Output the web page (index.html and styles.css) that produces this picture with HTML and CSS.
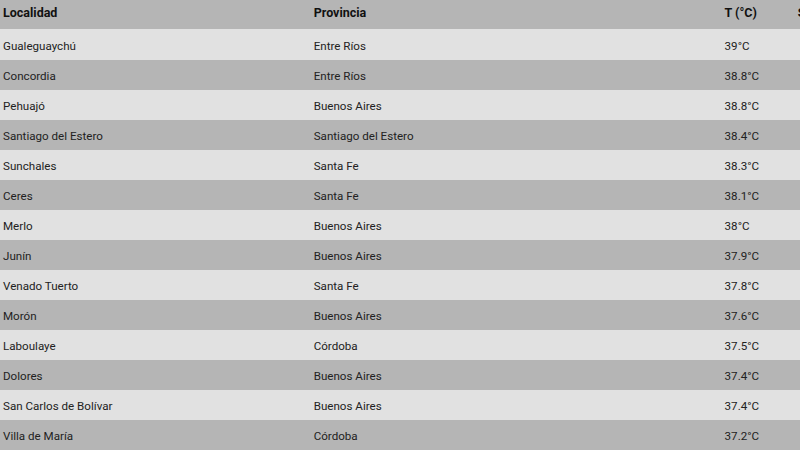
FILE: index.html
```html
<!DOCTYPE html>
<html lang="es">
<head>
<meta charset="utf-8">
<title>Temperaturas</title>
<link rel="stylesheet" href="styles.css">
</head>
<body>
<table class="temps">
  <thead>
    <tr><th class="c1">Localidad</th><th class="c2">Provincia</th><th class="c3">T (°C)</th><th class="c4">ST (°C)</th></tr>
  </thead>
  <tbody>
    <tr><td>Gualeguaychú</td><td>Entre Ríos</td><td>39°C</td><td></td></tr>
    <tr><td>Concordia</td><td>Entre Ríos</td><td>38.8°C</td><td></td></tr>
    <tr><td>Pehuajó</td><td>Buenos Aires</td><td>38.8°C</td><td></td></tr>
    <tr><td>Santiago del Estero</td><td>Santiago del Estero</td><td>38.4°C</td><td></td></tr>
    <tr><td>Sunchales</td><td>Santa Fe</td><td>38.3°C</td><td></td></tr>
    <tr><td>Ceres</td><td>Santa Fe</td><td>38.1°C</td><td></td></tr>
    <tr><td>Merlo</td><td>Buenos Aires</td><td>38°C</td><td></td></tr>
    <tr><td>Junín</td><td>Buenos Aires</td><td>37.9°C</td><td></td></tr>
    <tr><td>Venado Tuerto</td><td>Santa Fe</td><td>37.8°C</td><td></td></tr>
    <tr><td>Morón</td><td>Buenos Aires</td><td>37.6°C</td><td></td></tr>
    <tr><td>Laboulaye</td><td>Córdoba</td><td>37.5°C</td><td></td></tr>
    <tr><td>Dolores</td><td>Buenos Aires</td><td>37.4°C</td><td></td></tr>
    <tr><td>San Carlos de Bolívar</td><td>Buenos Aires</td><td>37.4°C</td><td></td></tr>
    <tr><td>Villa de María</td><td>Córdoba</td><td>37.2°C</td><td></td></tr>
  </tbody>
</table>
</body>
</html>
```
FILE: styles.css
```css
html, body {
  margin: 0;
  padding: 0;
  width: 800px;
  height: 450px;
  overflow: hidden;
  background: #e1e1e1;
}
.temps {
  border-collapse: collapse;
  table-layout: fixed;
  width: 900px;
  font-family: Roboto, "Liberation Sans", sans-serif;
  font-size: 11.6px;
  color: #222;
}
.temps th, .temps td {
  height: 28px;
  padding: 2px 3px 0;
  text-align: left;
  white-space: nowrap;
  overflow: hidden;
}
.temps th {
  height: 25px;
  padding: 0 3px 4px;
  font-weight: bold;
  font-size: 12.5px;
  color: #111;
}
.temps tbody tr:first-child td { height: 29px; }
.c1 { width: 304px; }
.c2 { width: 404px; }
.c3 { width: 67px; }
.c4 { width: 99px; }
.temps thead tr { background: #b5b5b5; }
.temps tbody tr:nth-child(odd) { background: #e1e1e1; }
.temps tbody tr:nth-child(even) { background: #b5b5b5; }
```
